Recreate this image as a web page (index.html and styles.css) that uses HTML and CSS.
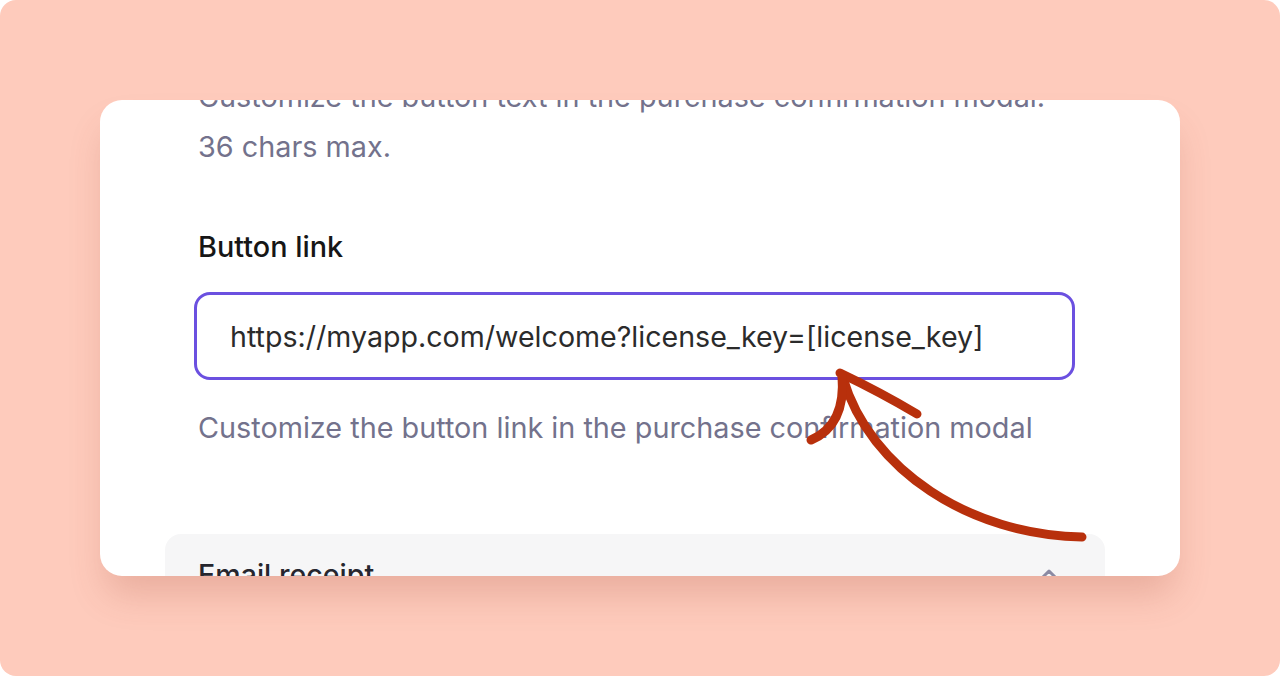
FILE: index.html
```html
<!DOCTYPE html>
<html>
<head>
<meta charset="utf-8">
<link rel="stylesheet" href="styles.css">
</head>
<body>
<div class="frame">
  <div class="card">
    <div class="fields">
      <p class="desc">Customize the button text in the purchase confirmation modal.<br>36 chars max.</p>
      <div class="label">Button link</div>
      <div class="input">https://myapp.com/welcome?license_key=[license_key]</div>
      <p class="help">Customize the button link in the purchase confirmation modal</p>
    </div>
    <div class="section">
      <span class="section-title">Email receipt</span>
      <svg class="chev" width="20" height="12" viewBox="0 0 20 12"><path d="M3 10 L10 3 L17 10" fill="none" stroke="#8b8aa3" stroke-width="3" stroke-linecap="round" stroke-linejoin="round"/></svg>
    </div>
  </div>
  <svg class="arrow" width="1280" height="676" viewBox="0 0 1280 676">
    <g fill="none" stroke="#b8300c" stroke-width="9" stroke-linecap="round" stroke-linejoin="round">
      <path d="M1082 537 C 970 535 870 470 843 378"/>
      <path d="M840 373 Q 880 392 917 414"/>
      <path d="M842 376 Q 846 425 811 440"/>
    </g>
  </svg>
</div>
</body>
</html>
```
FILE: styles.css
```css
html, body {
  margin: 0;
  padding: 0;
  background: #ffffff;
}
.frame {
  position: relative;
  width: 1280px;
  height: 676px;
  box-sizing: border-box;
  padding: 100px 100px 0 100px;
  background: #fecbbc;
  border-radius: 16px;
  overflow: hidden;
  font-family: Inter, "Noto Sans", sans-serif;
}
.card {
  height: 476px;
  background: #ffffff;
  border-radius: 22px;
  overflow: hidden;
  box-sizing: border-box;
  padding: 0 75px 0 65px;
  box-shadow: 0 24px 36px -6px rgba(160, 70, 50, 0.22);
}
.fields {
  padding-left: 29px;
  margin-top: -28px;
}
.desc {
  margin: 0;
  padding-left: 4px;
  font-size: 28.8px;
  line-height: 50px;
  color: #73728c;
}
.label {
  margin-top: 57px;
  padding-left: 4px;
  font-size: 28.8px;
  line-height: 36px;
  font-weight: 500;
  color: #161616;
}
.input {
  margin-top: 27px;
  width: 881px;
  height: 88px;
  box-sizing: border-box;
  border: 3px solid #6b50e0;
  border-radius: 16px;
  padding: 0 33px;
  display: flex;
  align-items: center;
  font-size: 28.6px;
  color: #2b2b2b;
}
.help {
  margin: 28px 0 0 0;
  padding-left: 4px;
  font-size: 28.8px;
  line-height: 40px;
  color: #73728c;
}
.section {
  margin-top: 86px;
  height: 120px;
  background: #f6f6f7;
  border-radius: 16px;
  display: flex;
  align-items: flex-start;
  justify-content: space-between;
  padding: 23px 46px 0 33px;
}
.section-title {
  font-size: 28.6px;
  line-height: 36px;
  font-weight: 500;
  color: #26262e;
}
.chev {
  margin-top: 11px;
}
.arrow {
  position: absolute;
  left: 0;
  top: 0;
  pointer-events: none;
}
```
